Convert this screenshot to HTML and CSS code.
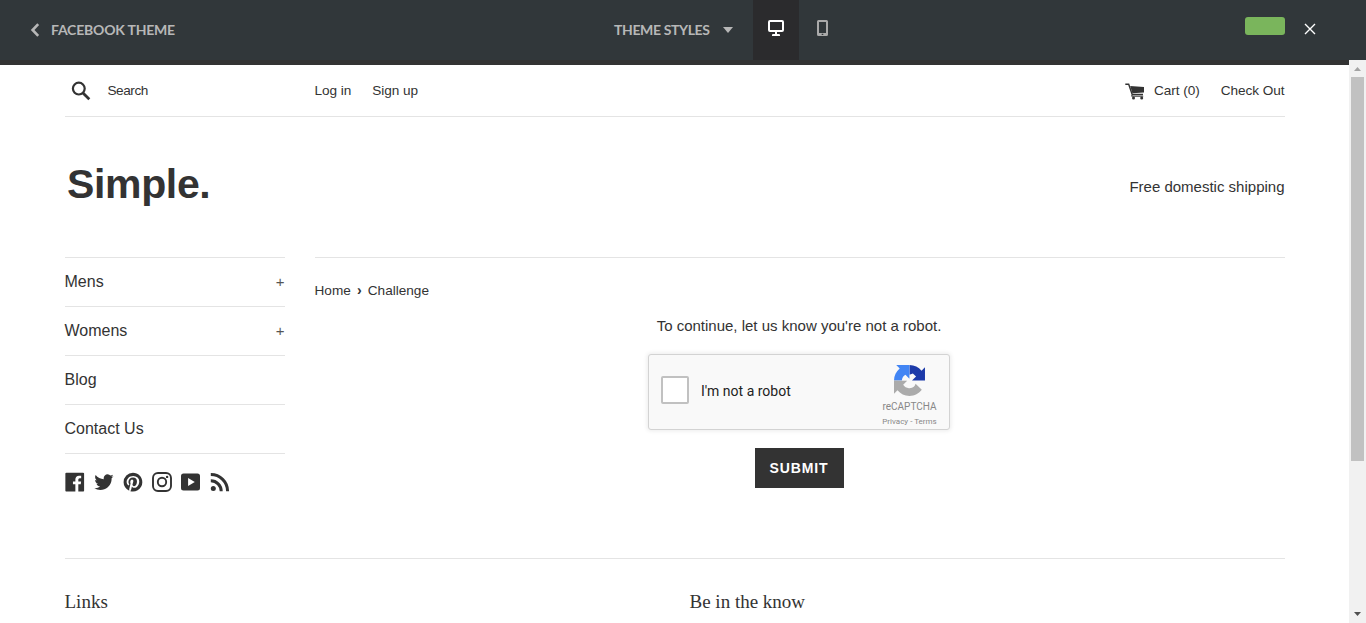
FILE: index.html
```html
<!DOCTYPE html>
<html lang="en">
<head>
<meta charset="utf-8">
<title>Simple – Challenge</title>
<link rel="stylesheet" href="styles.css">
</head>
<body>
<header class="editor">
  <div class="editor-left">
    <svg class="chevron" width="10" height="14" viewBox="0 0 10 14"><path d="M8.200 1.200 2.600 7 8.200 12.800" fill="none" stroke="#b7b7b7" stroke-width="2.600"/></svg>
    <span class="editor-title">Facebook Theme</span>
  </div>
  <div class="editor-center">
    <span class="editor-styles">Theme Styles</span>
    <svg class="caret" width="10" height="6" viewBox="0 0 10 6"><path d="M0 0h10L5 6z" fill="#b7b7b7"/></svg>
    <span class="device device-active"><svg width="16" height="16" viewBox="0 0 16 16"><path d="M2 0h12a2 2 0 0 1 2 2v8a2 2 0 0 1-2 2H9v2h2a1 1 0 0 1 1 1v1H4v-1a1 1 0 0 1 1-1h2v-2H2a2 2 0 0 1-2-2V2a2 2 0 0 1 2-2zm0 2v8h12V2z" fill="#fff" fill-rule="evenodd"/></svg></span>
    <span class="device"><svg width="11" height="16" viewBox="0 0 11 16"><path d="M1.500 0h8A1.500 1.500 0 0 1 11 1.500v13a1.500 1.500 0 0 1-1.500 1.500h-8A1.500 1.500 0 0 1 0 14.500v-13A1.500 1.500 0 0 1 1.500 0zM2 2v11h7V2zm2.700 11.700v1.300h1.600v-1.300z" fill="#aaa" fill-rule="evenodd"/></svg></span>
  </div>
  <div class="editor-right">
    <span class="save"></span>
    <svg class="close" width="12" height="12" viewBox="0 0 12 12"><path d="M1 1l10 10M11 1 1 11" stroke="#fff" stroke-width="1.400"/></svg>
  </div>
</header>

<div class="preview">
  <div class="page">
    <div class="container">
      <div class="topbar">
        <div class="search">
          <svg width="20" height="20" viewBox="0 0 20 20"><circle cx="7.800" cy="7.600" r="5.900" fill="none" stroke="#333" stroke-width="2.200"/><path d="M12 12l6.300 6.200" stroke="#333" stroke-width="2.800"/></svg>
          <span class="search-text">Search</span>
        </div>
        <div class="account"><a>Log in</a><a>Sign up</a></div>
        <div class="cart">
          <svg width="20" height="17" viewBox="0 0 20 17"><path d="M.3 1.200h3.400l3.500 10.300h10.800" fill="none" stroke="#333" stroke-width="1.400"/><path d="M5.200 3 19 4v5.400L7.400 10.300z" fill="#333"/><path d="M7.400 11.500 6.600 13.200h11.600" fill="none" stroke="#333"/><circle cx="8.500" cy="14.900" r="1.500" fill="#333"/><circle cx="16.700" cy="14.900" r="1.500" fill="#333"/></svg>
          <a class="cart-link">Cart (0)</a><a class="checkout">Check Out</a>
        </div>
      </div>

      <div class="masthead">
        <div class="logo">Simple.</div>
        <div class="tagline">Free domestic shipping</div>
      </div>

      <div class="columns">
        <aside class="sidebar">
          <ul class="nav">
            <li><span>Mens</span><span class="plus">+</span></li>
            <li><span>Womens</span><span class="plus">+</span></li>
            <li><span>Blog</span></li>
            <li><span>Contact Us</span></li>
          </ul>
          <div class="social">
            <svg viewBox="0 0 20 20"><path d="M18.050.811q.439 0 .744.305t.305.744v16.637q0 .439-.305.744t-.744.305h-4.732v-7.221h2.415l.342-2.854h-2.757v-1.830q0-.659.293-1t1.073-.342h1.488V3.762q-.976-.098-2.171-.098-1.634 0-2.635.964t-1 2.720V9.470H7.951v2.854h2.415v7.221H1.413q-.439 0-.744-.305t-.305-.744V1.859q0-.439.305-.744T1.413.810H18.050z"/></svg>
            <svg viewBox="0 0 20 20"><path d="M19.551 4.208q-.815 1.202-1.956 2.038 0 .082.020.255t.020.255q0 1.589-.469 3.179t-1.426 3.036-2.272 2.567-3.158 1.793-3.963.672q-3.301 0-6.031-1.773.571.041.937.041 2.751 0 4.911-1.671-1.284-.020-2.292-.784T2.456 11.850q.346.082.754.082.550 0 1.039-.163-1.365-.285-2.262-1.365T1.090 7.918v-.041q.774.408 1.773.448-.795-.530-1.263-1.396t-.469-1.864q0-1.019.509-1.997 1.487 1.854 3.596 2.924T9.810 7.184q-.143-.509-.143-.897 0-1.630 1.161-2.781t2.832-1.151q.815 0 1.569.326t1.284.917q1.345-.265 2.506-.958-.428 1.386-1.732 2.180 1.243-.163 2.262-.611z"/></svg>
            <svg viewBox="0 0 20 20"><path d="M9.958.811q1.903 0 3.635.744t2.988 2 2 2.988.744 3.635q0 2.537-1.256 4.696t-3.415 3.415-4.696 1.256q-1.390 0-2.659-.366.707-1.147.951-2.025l.659-2.561q.244.463.903.817t1.390.354q1.464 0 2.622-.842t1.793-2.305.634-3.293q0-2.171-1.671-3.769t-4.257-1.598q-1.586 0-2.903.537T5.298 5.897 4.066 7.775t-.427 2.037q0 1.268.476 2.220t1.427 1.342q.171.073.293.012t.171-.232q.171-.610.195-.756.098-.268-.122-.512-.634-.707-.634-1.830 0-1.854 1.281-3.183t3.354-1.329q1.830 0 2.854 1t1.025 2.610q0 1.342-.366 2.476t-1.049 1.817-1.561.683q-.732 0-1.195-.537t-.293-1.269q.098-.342.256-.878t.268-.915.207-.817.098-.732q0-.610-.317-1t-.927-.390q-.756 0-1.269.695t-.512 1.744q0 .390.061.756t.134.537l.073.171q-1 4.342-1.220 5.098-.195.927-.146 2.171-2.513-1.122-4.062-3.440T.591 10.177q0-3.879 2.744-6.623T9.958.810z"/></svg>
            <svg viewBox="0 0 20 20"><rect x="1" y="1" width="18" height="18" rx="5" fill="none" stroke="#333" stroke-width="1.900"/><circle cx="10" cy="10" r="4.200" fill="none" stroke="#333" stroke-width="1.900"/><circle cx="15.100" cy="4.900" r="1.200"/></svg>
            <svg viewBox="0 0 20 20"><path d="M2.500 1.500h14a2.500 2.500 0 0 1 2.500 2.500v12a2.500 2.500 0 0 1-2.500 2.500h-14A2.500 2.500 0 0 1 0 16V4A2.500 2.500 0 0 1 2.500 1.500zM7.100 6v8l6.700-4z" fill-rule="evenodd"/></svg>
            <svg viewBox="0 0 20 20"><circle cx="3.300" cy="16.500" r="2.500"/><path d="M.8 8.800a10.400 10.400 0 0 1 10.400 10.400M.8 2.600a16.700 16.700 0 0 1 16.800 16.600" fill="none" stroke="#333" stroke-width="3"/></svg>
          </div>
        </aside>
        <main class="main">
          <nav class="crumbs"><span>Home</span><span class="sep">›</span><span>Challenge</span></nav>
          <p class="prompt">To continue, let us know you're not a robot.</p>
          <div class="captcha">
            <span class="checkbox"></span>
            <span class="captcha-label">I'm not a robot</span>
            <div class="brand">
              <svg width="31" height="31" viewBox="0 0 64 64"><path d="M64 31.955l-.033-1.370V4.687l-7.160 7.160C50.948 4.674 42.033.093 32.050.093V20L39 17.500l6.500 6-8.307 8.450L64 31.953" fill="#1c3aa9"/><path d="M31.862.094l-1.370.033H4.594l7.160 7.160C4.580 13.147 0 22.060 0 32.046h19l-2.740-.300C16.500 27 19.500 22 23.547 19.943l8.307 8.307L31.860.095" fill="#4285f4"/><path d="M.001 32.045l.033 1.370v25.898l7.160-7.160c5.860 7.173 14.774 11.754 24.760 11.754 10.400 0 19.622-4.960 25.458-12.640L44.500 38.500a15.550 15.550 0 0 1-3.640 6.600c-2.050 1.600-4.952 2.906-8.968 2.906-.485 0-.86-.057-1.135-.163-4.976-.393-9.288-3.140-11.828-7.124l8.307-8.307L.001 32.047" fill="#ababab"/></svg>
              <span class="brand-name">reCAPTCHA</span>
              <span class="brand-links">Privacy - Terms</span>
            </div>
          </div>
          <button class="submit">SUBMIT</button>
        </main>
      </div>

      <footer class="footer"><h3>Links</h3><h3>Be in the know</h3></footer>
    </div>
  </div>
  <div class="scrollbar">
    <svg width="7" height="4" viewBox="0 0 7 4"><path d="M0 4h7L3.500 0z" fill="#a3a3a3"/></svg>
    <div class="thumb"></div>
    <svg class="down" width="7" height="4" viewBox="0 0 7 4"><path d="M0 0h7L3.500 4z" fill="#505050"/></svg>
  </div>
</div>
</body>
</html>
```

FILE: styles.css
```css
* { box-sizing: border-box; }
body {
  margin: 0;
  height: 623px;
  overflow: hidden;
  background: #fff;
  color: #333;
  font-family: "Liberation Sans", Arial, sans-serif;
}
svg { display: block; flex: none; }

/* Editor bar */
.editor {
  display: grid;
  grid-template-columns: 614px 1fr 121px;
  height: 60px;
  background: #31373a;
  color: #b7b7b7;
  font: 700 14px/20px Lato, sans-serif;
  text-transform: uppercase;
  white-space: nowrap;
}
.editor-left { display: flex; align-items: center; padding-left: 30px; }
.editor-title { margin-left: 11px; letter-spacing: -0.2px; }
.editor-center { display: flex; align-items: center; }
.editor-styles { width: 96px; letter-spacing: -0.38px; }
.caret { margin: 0 20px 0 13px; }
.device {
  display: flex;
  justify-content: center;
  width: 46px;
  height: 60px;
  padding-top: 20px;
}
.device-active { background: #2b2b2d; }
.editor-right { display: flex; padding-top: 17px; }
.save { width: 40px; height: 18px; border-radius: 3px; background: #7ab55c; }
.close { margin: 6px 0 0 19px; }

/* Preview frame */
.preview { display: flex; height: 563px; }
.page { width: 1349px; border-top: 5px solid #333; overflow: hidden; }
.container { width: 1220px; margin-left: 64.5px; }

.topbar {
  display: grid;
  grid-template-columns: 250px 1fr auto;
  align-items: center;
  height: 52px;
  padding-bottom: 1px;
  border-bottom: 1px solid #e4e4e4;
  font-size: 13.6px;
  letter-spacing: -0.05px;
  white-space: nowrap;
}
.search { display: flex; align-items: center; padding-left: 6px; }
.search svg { margin-top: 1px; }
.search-text { margin-left: 17px; letter-spacing: -0.45px; }
.account { display: flex; gap: 21px; }
.cart { display: flex; align-items: center; }
.cart svg { margin-top: 2px; }
.cart-link { margin-left: 9px; }
.checkout { margin-left: 21px; }

.masthead {
  display: flex;
  justify-content: space-between;
  align-items: center;
  height: 140px;
  padding-bottom: 2px;
}
.logo { padding: 0 0 4px 2.5px; font-size: 41px; font-weight: 700; line-height: 46px; letter-spacing: -0.35px; }
.tagline { font-size: 15px; }

.columns { display: grid; grid-template-columns: 220px 970px; gap: 30px; height: 301px; }
.nav { margin: 0; padding: 0; list-style: none; border-bottom: 1px solid #e4e4e4; }
.nav li {
  display: flex;
  justify-content: space-between;
  align-items: center;
  height: 49px;
  border-top: 1px solid #e4e4e4;
  font-size: 16px;
}
.plus { padding-bottom: 2px; color: #555; font-size: 15px; }
.social { display: flex; gap: 9px; padding-top: 18px; }
.social svg { width: 20px; height: 20px; fill: #333; }

.main {
  display: flex;
  flex-direction: column;
  align-items: center;
  padding-right: 1px;
  border-top: 1px solid #e4e4e4;
}
.crumbs { display: flex; align-self: flex-start; margin-top: 25px; font-size: 13.6px; line-height: 16px; }
.sep { width: 17px; font-size: 14px; font-weight: 700; line-height: 15px; text-align: center; }
.prompt { margin: 18px 0 0; font-size: 15px; line-height: 18px; }
.captcha {
  display: flex;
  width: 302px;
  height: 76px;
  margin-top: 19px;
  padding-left: 12px;
  border: 1px solid #d3d3d3;
  border-radius: 3px;
  background: #f9f9f9;
  box-shadow: 0 0 4px 1px rgba(0, 0, 0, 0.08);
  font-family: Roboto, sans-serif;
}
.checkbox {
  flex: none;
  width: 28px;
  height: 28px;
  margin-top: 21px;
  border: 2px solid #c1c1c1;
  border-radius: 2px;
  background: #fff;
}
.captcha-label { flex: none; width: 181px; margin: 28px 0 0 12px; color: #222; font-size: 14px; line-height: 17px; }
.brand {
  display: flex;
  flex: none;
  flex-direction: column;
  align-items: center;
  width: 55px;
  padding-top: 10px;
  color: #888;
  white-space: nowrap;
}
.brand-name { margin-top: 5px; font-size: 10px; line-height: 12px; }
.brand-links { margin-top: 4px; font-size: 8px; line-height: 10px; }
.submit {
  width: 89px;
  height: 40px;
  margin-top: 18px;
  padding: 0;
  border: 0;
  background: #333;
  color: #fff;
  font: 700 14px/40px "Liberation Sans", Arial, sans-serif;
  letter-spacing: 0.9px;
}

.footer {
  display: grid;
  grid-template-columns: 1fr 1fr;
  gap: 30px;
  padding-top: 32px;
  border-top: 1px solid #e4e4e4;
}
.footer h3 { margin: 0; font: 400 19px/22px "Liberation Serif", "Times New Roman", serif; }

/* Scrollbar */
.scrollbar {
  display: flex;
  flex-direction: column;
  align-items: center;
  width: 17px;
  padding: 7px 0;
  background: #f1f1f1;
}
.thumb { width: 13px; height: 384px; margin-top: 6px; background: #c1c1c1; }
.down { margin-top: auto; }
```
